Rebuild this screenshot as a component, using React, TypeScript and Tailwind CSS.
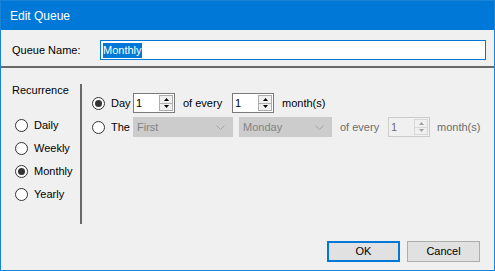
import React from "react";

function Radio({ checked }: { checked?: boolean }) {
  return (
    <div className="w-[13px] h-[13px] shrink-0 rounded-full border border-[#333333] bg-white flex items-center justify-center">
      {checked && <div className="w-[7px] h-[7px] rounded-full bg-[#333333]" />}
    </div>
  );
}

function Arrow({ up, color }: { up?: boolean; color: string }) {
  return (
    <svg width="5" height="3" viewBox="0 0 5 3">
      {up ? <path d="M0 3 L2.5 0 L5 3 Z" fill={color} /> : <path d="M0 0 L2.5 3 L5 0 Z" fill={color} />}
    </svg>
  );
}

function Spinner({ value, disabled }: { value: string; disabled?: boolean }) {
  const arrow = disabled ? "#a0a0a0" : "#000000";
  const box = disabled ? "border-[#d8d8d8] bg-[#f0f0f0]" : "border-[#adadad] bg-[#f0f0f0]";
  return (
    <div
      className={`w-[42px] h-[20px] flex items-stretch border ${
        disabled ? "border-[#cccccc] bg-[#f0f0f0] text-[#6d6d6d]" : "border-[#7a7a7a] bg-white text-black"
      }`}
    >
      <div className="flex-1 pl-[2px] flex items-center leading-none">{value}</div>
      <div className="w-[14px] my-[1px] mr-[1px] flex flex-col">
        <div className={`flex-1 flex items-center justify-center border ${box}`}>
          <Arrow up color={arrow} />
        </div>
        <div className={`flex-1 flex items-center justify-center border border-t-0 ${box}`}>
          <Arrow color={arrow} />
        </div>
      </div>
    </div>
  );
}

function Combo({ value, width }: { value: string; width: string }) {
  return (
    <div className={`${width} h-[20px] bg-[#cccccc] border border-[#cccccc] flex items-center text-[#838383] pl-[3px]`}>
      <span className="flex-1">{value}</span>
      <svg width="9" height="5" viewBox="0 0 9 5" className="mr-[7px]">
        <path d="M0.5 0.5 L4.5 4.5 L8.5 0.5" fill="none" stroke="#a6a6a6" strokeWidth="1" />
      </svg>
    </div>
  );
}

export default function App() {
  return (
    <div
      className="w-[495px] h-[271px] bg-[#f0f0f0] border border-[#1883d7] flex flex-col text-[11px] text-black"
      style={{ fontFamily: '"Liberation Sans", Arial, sans-serif' }}
    >
      {/* title bar */}
      <div className="h-[29px] bg-[#0078d7] text-white text-[12px] pl-[9px] flex items-center">Edit Queue</div>

      {/* queue name */}
      <div className="h-[36px] pl-[11px] pt-[10px] flex items-start">
        <div className="w-[88px] h-[20px] flex items-center">Queue Name:</div>
        <div className="w-[386px] h-[20px] border border-[#0078d7] bg-white flex items-center pl-[2px]">
          <span className="bg-[#0078d7] text-white leading-[15px]">Monthly</span>
        </div>
      </div>

      <div className="h-[2px] bg-[#696969]" />

      {/* body */}
      <div className="flex-1 flex">
        <div className="w-[79px] pt-[16px]">
          <div className="pl-[11px] h-[13px] leading-[13px]">Recurrence</div>
          <div className="mt-[17px] pl-[14px] flex flex-col">
            {["Daily", "Weekly", "Monthly", "Yearly"].map((r) => (
              <div key={r} className="h-[23px] flex items-center gap-[6px]">
                <Radio checked={r === "Monthly"} />
                <span>{r}</span>
              </div>
            ))}
          </div>
        </div>
        <div className="w-[2px] h-[140px] mt-[16px] bg-[#696969]" />

        <div className="flex-1 pt-[25px] pl-[10px] flex flex-col gap-[4px]">
          <div className="h-[20px] flex items-center">
            <div className="w-[41px] flex items-center gap-[6px]">
              <Radio checked />
              <span>Day</span>
            </div>
            <Spinner value="1" />
            <span className="ml-[8px] w-[49px]">of every</span>
            <Spinner value="1" />
            <span className="ml-[8px]">month(s)</span>
          </div>
          <div className="h-[20px] flex items-center">
            <div className="w-[41px] flex items-center gap-[6px]">
              <Radio />
              <span>The</span>
            </div>
            <Combo value="First" width="w-[100px]" />
            <div className="ml-[6px]">
              <Combo value="Monday" width="w-[93px]" />
            </div>
            <span className="ml-[8px] w-[48px] text-[#6d6d6d]">of every</span>
            <Spinner value="1" disabled />
            <span className="ml-[7px] text-[#6d6d6d]">month(s)</span>
          </div>
        </div>
      </div>

      {/* buttons */}
      <div className="pb-[8px] pr-[14px] flex justify-end gap-[7px]">
        <button className="w-[73px] h-[21px] border-2 border-[#0078d7] bg-[#e1e1e1] text-[11px] leading-none">OK</button>
        <button className="w-[73px] h-[21px] border border-[#adadad] bg-[#e1e1e1] text-[11px] leading-none">Cancel</button>
      </div>
    </div>
  );
}
